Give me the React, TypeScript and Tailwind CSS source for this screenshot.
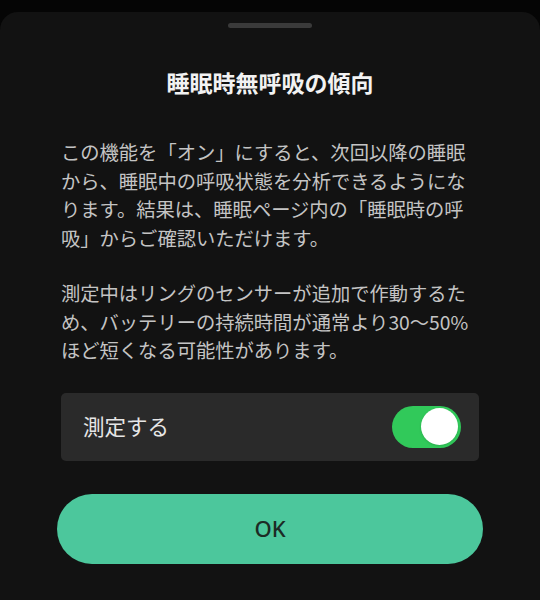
import React, { useState } from "react";

const jp = {
  fontFamily: '"Noto Sans CJK JP", "Noto Sans", sans-serif',
};

export default function App() {
  const [on, setOn] = useState(true);

  return (
    <div className="w-[540px] h-[600px] bg-[#050505] pt-[12px] overflow-hidden" style={jp}>
      <div className="h-full bg-[#121212] rounded-t-[18px] flex flex-col items-center">
        {/* drag handle */}
        <div className="mt-[11px] w-[84px] h-[5px] rounded-full bg-[#3a3a3a]" />

        <h2 className="mt-[39px] text-[23px] leading-[30px] font-bold text-[#f2f2f2]">
          睡眠時無呼吸の傾向
        </h2>

        <div className="mt-[41px] w-[418px] text-[19.3px] leading-[28.5px] text-[#c4c4c4] whitespace-nowrap">
          <p>
            この機能を「オン」にすると、次回以降の睡眠
            <br />
            から、睡眠中の呼吸状態を分析できるようにな
            <br />
            ります。結果は、睡眠ページ内の「睡眠時の呼
            <br />
            吸」からご確認いただけます。
          </p>
          <p className="mt-[27px]">
            測定中はリングのセンサーが追加で作動するた
            <br />
            め、バッテリーの持続時間が通常より30～50%
            <br />
            ほど短くなる可能性があります。
          </p>
        </div>

        <div className="mt-[28px] w-[418px] h-[68px] rounded-[5px] bg-[#2a2a2a] flex items-center justify-between pl-[22px] pr-[18px]">
          <span className="text-[21.5px] text-[#e6e6e6]">測定する</span>
          <button
            type="button"
            onClick={() => setOn(!on)}
            className={`w-[69px] h-[42px] rounded-full flex items-center px-[3px] ${
              on ? "bg-[#31c95a] justify-end" : "bg-[#555] justify-start"
            }`}
          >
            <span className="w-[37px] h-[37px] rounded-full bg-white shadow" />
          </button>
        </div>

        <button
          type="button"
          className="mt-[33px] w-[426px] h-[70px] rounded-full bg-[#4cc79c] text-[22px] font-medium text-[#1c2b25]"
          style={{ fontFamily: '"Noto Sans", "Noto Sans CJK JP", sans-serif' }}
        >
          OK
        </button>
      </div>
    </div>
  );
}
